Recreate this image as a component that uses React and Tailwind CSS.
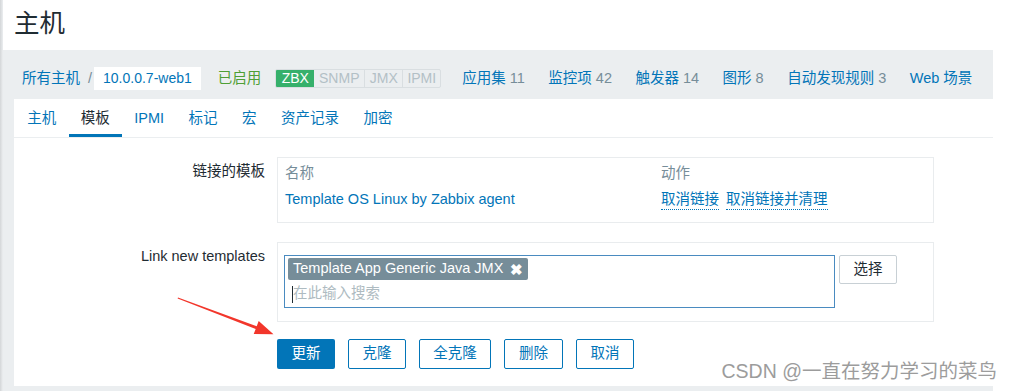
import React from "react";

const navLinks = [
  { label: "应用集", count: "11" },
  { label: "监控项", count: "42" },
  { label: "触发器", count: "14" },
  { label: "图形", count: "8" },
  { label: "自动发现规则", count: "3" },
  { label: "Web 场景", count: "" },
];

const tabs = ["主机", "模板", "IPMI", "标记", "宏", "资产记录", "加密"];

const actions = [
  { label: "克隆", w: "w-[58px]" },
  { label: "全克隆", w: "w-[72px]" },
  { label: "删除", w: "w-[59px]" },
  { label: "取消", w: "w-[58px]" },
];

const App = () => {
  return (
    <div className="relative w-[1012px] h-[391px] overflow-hidden bg-white flex font-['Liberation_Sans','Noto_Sans_CJK_SC',sans-serif] text-[14.5px] text-[#1f2c33]">
      {/* left shadow */}
      <div className="w-[3px] shrink-0 bg-linear-to-r from-[#d3d6d8] to-[#eceef0]" />

      <div className="w-[990px] shrink-0 flex flex-col">
        {/* title */}
        <div className="h-[50px] pl-[11px] pt-[5px]">
          <h1 className="text-[25.5px] leading-[36px] text-[#1f2c33]">主机</h1>
        </div>

        <div className="flex-1 bg-[#ebeef0] flex flex-col">
          {/* breadcrumb bar */}
          <div className="h-[49px] pl-[19px] pt-[17px]">
            <div className="h-[23px] flex items-center">
              <span className="text-[#0275b8]">所有主机</span>
              <span className="ml-[8px] text-[#768d99]">/</span>
              <span className="ml-[2px] h-[23px] px-[9px] bg-white flex items-center text-[14px] text-[#0275b8]">
                10.0.0.7-web1
              </span>
              <span className="ml-[17px] text-[#4e9f35]">已启用</span>
              <div className="ml-[14px] h-[19px] flex border border-[#d9dee1] rounded-[2px] overflow-hidden text-[14px] leading-[17px]">
                <span className="w-[38px] bg-[#36b06b] text-white text-center">ZBX</span>
                <span className="w-[51px] text-[#b3c0c6] text-center border-r border-[#d9dee1]">SNMP</span>
                <span className="w-[38px] text-[#b3c0c6] text-center border-r border-[#d9dee1]">JMX</span>
                <span className="w-[37px] text-[#b3c0c6] text-center">IPMI</span>
              </div>
              <div className="ml-[21px] flex gap-[23.5px]">
                {navLinks.map((l) => (
                  <span key={l.label} className="text-[#0275b8]">
                    {l.label}
                    {l.count && <span className="ml-[4px] text-[#768d99]">{l.count}</span>}
                  </span>
                ))}
              </div>
            </div>
          </div>

          {/* main panel */}
          <div className="ml-[11px] mb-[5px] flex-1 bg-white">
            {/* tabs */}
            <div className="h-[39px] pl-[1px] flex border-b border-[#ebeef0]">
              {tabs.map((t) => (
                <div
                  key={t}
                  className={
                    t === "模板"
                      ? "px-[12.25px] flex items-center border-b-[3px] border-[#0275b8] pt-[5px] text-[#1f2c33]"
                      : "px-[12.25px] flex items-center pt-[2px] text-[#0275b8]"
                  }
                >
                  {t}
                </div>
              ))}
            </div>

            {/* linked templates */}
            <div className="mt-[19px] flex">
              <div className="w-[251px] pt-[4px] text-right">链接的模板</div>
              <div className="ml-[12px] w-[657px] border border-[#e9ecee] px-[7px] pt-[4px] pb-[8px]">
                <div className="h-[24px] flex items-center text-[#768d99]">
                  <span className="w-[376px]">名称</span>
                  <span>动作</span>
                </div>
                <div className="h-[28px] flex items-center">
                  <span className="w-[376px] text-[#0275b8]">Template OS Linux by Zabbix agent</span>
                  <span className="text-[#0275b8] border-b border-dotted border-[#0275b8] leading-[19px]">取消链接</span>
                  <span className="ml-[7px] text-[#0275b8] border-b border-dotted border-[#0275b8] leading-[19px]">取消链接并清理</span>
                </div>
              </div>
            </div>

            {/* link new templates */}
            <div className="mt-[19px] flex">
              <div className="w-[251px] pt-[4px] text-right">Link new templates</div>
              <div className="ml-[12px] w-[657px] border border-[#e9ecee] pl-[6px] pt-[12px] pb-[13px] flex items-start">
                <div className="w-[551px] h-[53px] border border-[#4a8bc0] px-[3px] pt-[2px]">
                  <div className="inline-flex items-center h-[22px] rounded-[2px] bg-[#768d99] text-white pl-[5px] pr-[5px]">
                    Template App Generic Java JMX
                    <span className="ml-[7px] text-[15px] font-bold leading-none">✖</span>
                  </div>
                  <div className="h-[24px] mt-[2px] flex items-center pl-[4px]">
                    <span className="w-[1px] h-[17px] bg-[#1f2c33]" />
                    <span className="text-[#aebbc1]">在此输入搜索</span>
                  </div>
                </div>
                <button className="ml-[4px] w-[58px] h-[29px] border border-[#c8d0d5] rounded-[2px] bg-white text-[#1f2c33]">
                  选择
                </button>
              </div>
            </div>

            {/* buttons */}
            <div className="mt-[17px] ml-[263px] flex gap-[13px]">
              <button className="w-[58px] h-[30px] rounded-[2px] bg-[#0275b8] text-white">更新</button>
              {actions.map((a) => (
                <button
                  key={a.label}
                  className={`${a.w} h-[30px] rounded-[2px] border border-[#0275b8] bg-white text-[#0275b8]`}
                >
                  {a.label}
                </button>
              ))}
            </div>
          </div>
        </div>
      </div>

      <div className="flex-1 bg-white" />

      {/* red arrow annotation */}
      <svg className="absolute inset-0 pointer-events-none" width="1012" height="391" viewBox="0 0 1012 391">
        <polygon
          points="178,297.4 256.7,326.2 258.7,321 273.5,334.3 253.7,334.1 255.7,329 177.6,298.6"
          fill="#f2362b"
        />
      </svg>

      {/* watermark */}
      <div className="absolute right-[15px] bottom-[8px] text-[19.5px] leading-[24px] text-[#9c9c9c]">
        CSDN @一直在努力学习的菜鸟
      </div>
    </div>
  );
};

export default App;
